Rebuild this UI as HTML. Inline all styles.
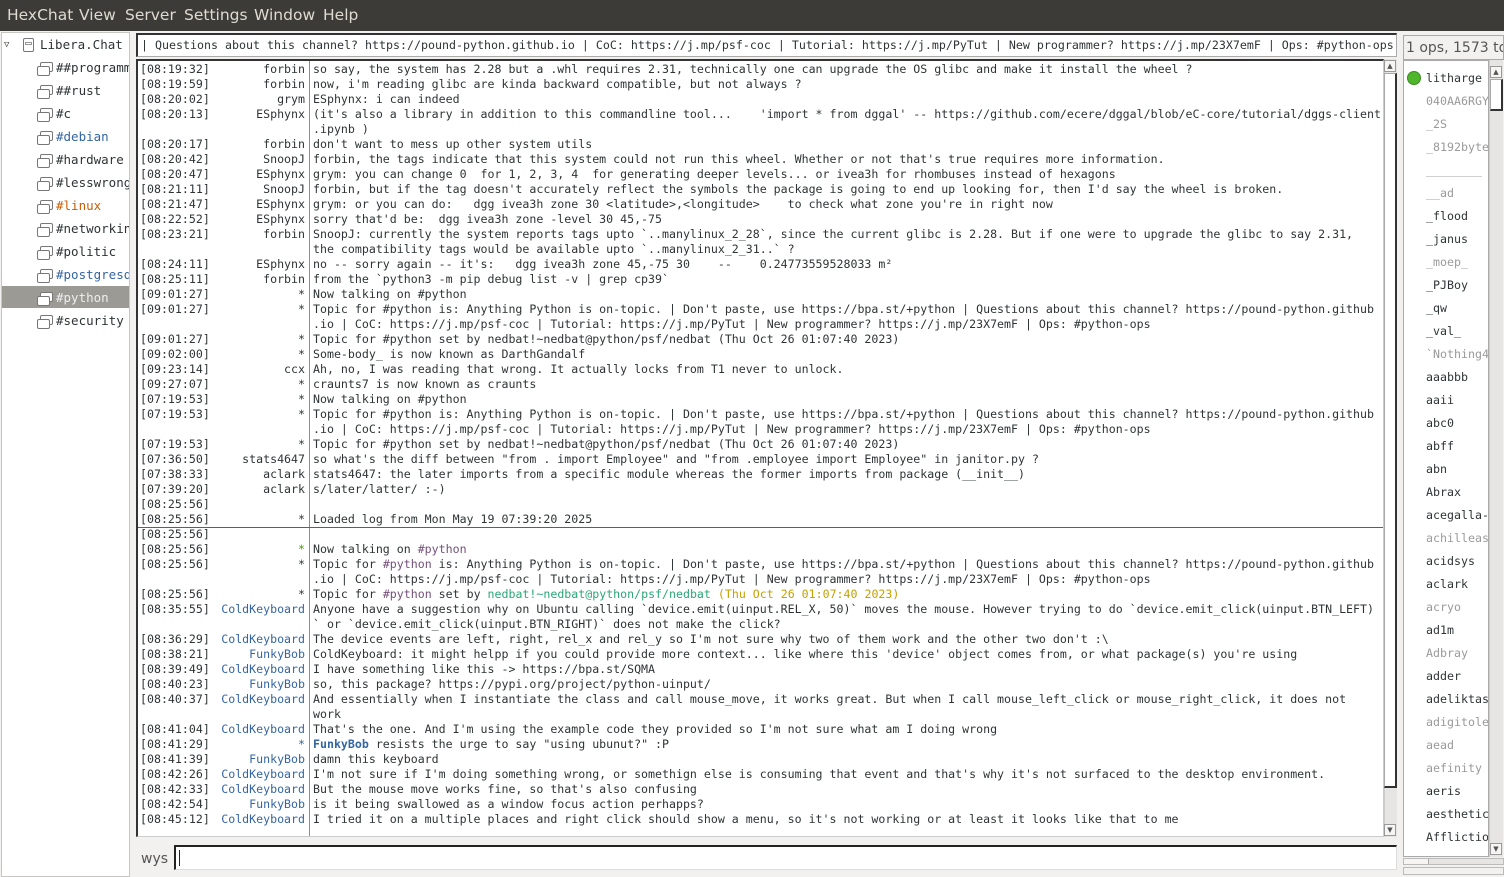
<!DOCTYPE html>
<html><head><meta charset="utf-8"><style>
*{box-sizing:border-box;margin:0;padding:0}
body{width:1504px;height:877px;overflow:hidden;background:#f2f1f0;font-family:"DejaVu Sans","Liberation Sans",sans-serif;color:#2e3436;position:relative}
#menu{position:absolute;left:0;top:0;width:1504px;height:31px;background:#3c3b37;color:#dfdbd2;font-size:15.5px}
#menu span{position:absolute;top:6px}
.mono{font-family:"DejaVu Sans Mono","Liberation Mono",monospace}
#tree{position:absolute;left:1px;top:32px;width:129px;height:845px;background:#fff;border:1px solid #c8c6c3;font-size:12.5px;overflow:hidden}
.ti{position:absolute;height:21px;line-height:21px;white-space:nowrap}
.ic{position:absolute;width:13px;height:10px;border:1.3px solid #777;border-radius:2px;background:#fff}
.ic:before{content:"";position:absolute;left:-4px;top:3px;width:11px;height:8px;border:1.3px solid #777;border-radius:2px;background:#fff}
#topic{position:absolute;left:136px;top:33px;width:1261px;height:24px;background:#fff;border:1px solid #aaa;border-top:2px solid #333;border-left:2px solid #333;font-size:11.63px;line-height:20px;padding-left:3px;white-space:nowrap;overflow:hidden}
#chat{position:absolute;left:136px;top:59px;width:1248px;height:778px;background:#fff;border-top:2px solid #333;border-left:2px solid #333;border-right:1px solid #ccc;border-bottom:1px solid #ccc;overflow:hidden}
.r{position:absolute;left:0;height:15px;line-height:15px;font-size:11.6px;white-space:pre;width:1246px}
.t{position:absolute;left:2px}
.n{position:absolute;right:1079px;text-align:right}
.m{position:absolute;left:175px}
#vl{position:absolute;left:171px;top:0;width:1px;height:780px;background:#8c8ca0}
#sep{position:absolute;left:0;top:466px;width:1246px;height:1px;background:#8f5902}
.sb{position:absolute;background:#e6e5e3;border-left:1px solid #ccc}
.arr{position:absolute;width:12px;height:12px;background:#f6f5f4;border:1px solid #999;font-size:7px;line-height:10px;text-align:center;color:#555}
#input{position:absolute;left:174px;top:845px;width:1223px;height:25px;background:#fff;border-top:2px solid #222;border-left:2px solid #222;border-right:1px solid #ddd;border-bottom:1px solid #ddd}
#users{position:absolute;left:1403px;top:60px;width:86px;height:797px;background:#fff;border:1px solid #aaa;overflow:hidden}
.u{position:absolute;left:22px;height:23px;line-height:23px;font-size:11.63px;white-space:nowrap}
.g{color:#9a9a9a}
.b{color:#3465a4}.p{color:#75507b}.gr{color:#4e9a06}.o{color:#c4a000}
</style></head><body>
<div id="menu"><span style="left:7px">HexChat</span><span style="left:79px">View</span><span style="left:125px">Server</span><span style="left:184px">Settings</span><span style="left:254px">Window</span><span style="left:323px">Help</span></div>

<div id="tree" class="mono">
<div class="ti" style="left:2px;top:2px;font-size:9px;color:#444">▽</div>
<div style="position:absolute;left:21px;top:5px;width:11px;height:14px;border:1.3px solid #777;border-radius:2px"><div style="margin:3px 1px;height:3px;border:1px solid #999"></div></div>
<div class="ti" style="left:38px;top:1px">Libera.Chat</div>
<div class="ic" style="left:38px;top:29px"></div><div class="ti" style="left:54px;top:24px">##programm</div>
<div class="ic" style="left:38px;top:52px"></div><div class="ti" style="left:54px;top:47px">##rust</div>
<div class="ic" style="left:38px;top:75px"></div><div class="ti" style="left:54px;top:70px">#c</div>
<div class="ic" style="left:38px;top:98px"></div><div class="ti b" style="left:54px;top:93px">#debian</div>
<div class="ic" style="left:38px;top:121px"></div><div class="ti" style="left:54px;top:116px">#hardware</div>
<div class="ic" style="left:38px;top:144px"></div><div class="ti" style="left:54px;top:139px">#lesswrong</div>
<div class="ic" style="left:38px;top:167px"></div><div class="ti" style="left:54px;top:162px;color:#ce5c00">#linux</div>
<div class="ic" style="left:38px;top:190px"></div><div class="ti" style="left:54px;top:185px">#networking</div>
<div class="ic" style="left:38px;top:213px"></div><div class="ti" style="left:54px;top:208px">#politic</div>
<div class="ic" style="left:38px;top:236px"></div><div class="ti b" style="left:54px;top:231px">#postgresql</div>
<div style="position:absolute;left:0;top:253px;width:127px;height:22px;background:#9c9a95"></div>
<div class="ic" style="left:38px;top:259px"></div><div class="ti" style="left:54px;top:254px;color:#eee">#python</div>
<div class="ic" style="left:38px;top:282px"></div><div class="ti" style="left:54px;top:277px">#security</div>
</div>

<div id="topic" class="mono">| Questions about this channel? https://pound-python.github.io | CoC: https://j.mp/psf-coc | Tutorial: https://j.mp/PyTut | New programmer? https://j.mp/23X7emF | Ops: #python-ops</div>

<div id="chat" class="mono">
<div id="vl"></div><div id="sep"></div>
<div class="r" style="top:1px"><span class="t">[08:19:32]</span><span class="n">forbin</span><span class="m">so say, the system has 2.28 but a .whl requires 2.31, technically one can upgrade the OS glibc and make it install the wheel ?</span></div>
<div class="r" style="top:16px"><span class="t">[08:19:59]</span><span class="n">forbin</span><span class="m">now, i'm reading glibc are kinda backward compatible, but not always ?</span></div>
<div class="r" style="top:31px"><span class="t">[08:20:02]</span><span class="n">grym</span><span class="m">ESphynx: i can indeed</span></div>
<div class="r" style="top:46px"><span class="t">[08:20:13]</span><span class="n">ESphynx</span><span class="m">(it's also a library in addition to this commandline tool...    'import * from dggal' -- https://github.com/ecere/dggal/blob/eC-core/tutorial/dggs-client</span></div>
<div class="r" style="top:61px"><span class="m">.ipynb )</span></div>
<div class="r" style="top:76px"><span class="t">[08:20:17]</span><span class="n">forbin</span><span class="m">don't want to mess up other system utils</span></div>
<div class="r" style="top:91px"><span class="t">[08:20:42]</span><span class="n">SnoopJ</span><span class="m">forbin, the tags indicate that this system could not run this wheel. Whether or not that's true requires more information.</span></div>
<div class="r" style="top:106px"><span class="t">[08:20:47]</span><span class="n">ESphynx</span><span class="m">grym: you can change 0  for 1, 2, 3, 4  for generating deeper levels... or ivea3h for rhombuses instead of hexagons</span></div>
<div class="r" style="top:121px"><span class="t">[08:21:11]</span><span class="n">SnoopJ</span><span class="m">forbin, but if the tag doesn't accurately reflect the symbols the package is going to end up looking for, then I'd say the wheel is broken.</span></div>
<div class="r" style="top:136px"><span class="t">[08:21:47]</span><span class="n">ESphynx</span><span class="m">grym: or you can do:   dgg ivea3h zone 30 &lt;latitude&gt;,&lt;longitude&gt;    to check what zone you're in right now</span></div>
<div class="r" style="top:151px"><span class="t">[08:22:52]</span><span class="n">ESphynx</span><span class="m">sorry that'd be:  dgg ivea3h zone -level 30 45,-75</span></div>
<div class="r" style="top:166px"><span class="t">[08:23:21]</span><span class="n">forbin</span><span class="m">SnoopJ: currently the system reports tags upto `..manylinux_2_28`, since the current glibc is 2.28. But if one were to upgrade the glibc to say 2.31,</span></div>
<div class="r" style="top:181px"><span class="m">the compatibility tags would be available upto `..manylinux_2_31..` ?</span></div>
<div class="r" style="top:196px"><span class="t">[08:24:11]</span><span class="n">ESphynx</span><span class="m">no -- sorry again -- it's:   dgg ivea3h zone 45,-75 30    --    0.24773559528033 m²</span></div>
<div class="r" style="top:211px"><span class="t">[08:25:11]</span><span class="n">forbin</span><span class="m">from the `python3 -m pip debug list -v | grep cp39`</span></div>
<div class="r" style="top:226px"><span class="t">[09:01:27]</span><span class="n">*</span><span class="m">Now talking on #python</span></div>
<div class="r" style="top:241px"><span class="t">[09:01:27]</span><span class="n">*</span><span class="m">Topic for #python is: Anything Python is on-topic. | Don't paste, use https://bpa.st/+python | Questions about this channel? https://pound-python.github</span></div>
<div class="r" style="top:256px"><span class="m">.io | CoC: https://j.mp/psf-coc | Tutorial: https://j.mp/PyTut | New programmer? https://j.mp/23X7emF | Ops: #python-ops</span></div>
<div class="r" style="top:271px"><span class="t">[09:01:27]</span><span class="n">*</span><span class="m">Topic for #python set by nedbat!~nedbat@python/psf/nedbat (Thu Oct 26 01:07:40 2023)</span></div>
<div class="r" style="top:286px"><span class="t">[09:02:00]</span><span class="n">*</span><span class="m">Some-body_ is now known as DarthGandalf</span></div>
<div class="r" style="top:301px"><span class="t">[09:23:14]</span><span class="n">ccx</span><span class="m">Ah, no, I was reading that wrong. It actually locks from T1 never to unlock.</span></div>
<div class="r" style="top:316px"><span class="t">[09:27:07]</span><span class="n">*</span><span class="m">craunts7 is now known as craunts</span></div>
<div class="r" style="top:331px"><span class="t">[07:19:53]</span><span class="n">*</span><span class="m">Now talking on #python</span></div>
<div class="r" style="top:346px"><span class="t">[07:19:53]</span><span class="n">*</span><span class="m">Topic for #python is: Anything Python is on-topic. | Don't paste, use https://bpa.st/+python | Questions about this channel? https://pound-python.github</span></div>
<div class="r" style="top:361px"><span class="m">.io | CoC: https://j.mp/psf-coc | Tutorial: https://j.mp/PyTut | New programmer? https://j.mp/23X7emF | Ops: #python-ops</span></div>
<div class="r" style="top:376px"><span class="t">[07:19:53]</span><span class="n">*</span><span class="m">Topic for #python set by nedbat!~nedbat@python/psf/nedbat (Thu Oct 26 01:07:40 2023)</span></div>
<div class="r" style="top:391px"><span class="t">[07:36:50]</span><span class="n">stats4647</span><span class="m">so what's the diff between "from . import Employee" and "from .employee import Employee" in janitor.py ?</span></div>
<div class="r" style="top:406px"><span class="t">[07:38:33]</span><span class="n">aclark</span><span class="m">stats4647: the later imports from a specific module whereas the former imports from package (__init__)</span></div>
<div class="r" style="top:421px"><span class="t">[07:39:20]</span><span class="n">aclark</span><span class="m">s/later/latter/ :-)</span></div>
<div class="r" style="top:436px"><span class="t">[08:25:56]</span></div>
<div class="r" style="top:451px"><span class="t">[08:25:56]</span><span class="n">*</span><span class="m">Loaded log from Mon May 19 07:39:20 2025</span></div>
<div class="r" style="top:466px"><span class="t">[08:25:56]</span></div>
<div class="r" style="top:481px"><span class="t">[08:25:56]</span><span class="n gr">*</span><span class="m">Now talking on <span class="p">#python</span></span></div>
<div class="r" style="top:496px"><span class="t">[08:25:56]</span><span class="n">*</span><span class="m">Topic for <span class="p">#python</span> is: Anything Python is on-topic. | Don't paste, use https://bpa.st/+python | Questions about this channel? https://pound-python.github</span></div>
<div class="r" style="top:511px"><span class="m">.io | CoC: https://j.mp/psf-coc | Tutorial: https://j.mp/PyTut | New programmer? https://j.mp/23X7emF | Ops: #python-ops</span></div>
<div class="r" style="top:526px"><span class="t">[08:25:56]</span><span class="n">*</span><span class="m">Topic for <span class="p">#python</span> set by <span style="color:#2aa876">nedbat!~nedbat@python/psf/nedbat</span> <span class="o">(Thu Oct 26 01:07:40 2023)</span></span></div>
<div class="r" style="top:541px"><span class="t">[08:35:55]</span><span class="n b">ColdKeyboard</span><span class="m">Anyone have a suggestion why on Ubuntu calling `device.emit(uinput.REL_X, 50)` moves the mouse. However trying to do `device.emit_click(uinput.BTN_LEFT)</span></div>
<div class="r" style="top:556px"><span class="m">` or `device.emit_click(uinput.BTN_RIGHT)` does not make the click?</span></div>
<div class="r" style="top:571px"><span class="t">[08:36:29]</span><span class="n b">ColdKeyboard</span><span class="m">The device events are left, right, rel_x and rel_y so I'm not sure why two of them work and the other two don't :\</span></div>
<div class="r" style="top:586px"><span class="t">[08:38:21]</span><span class="n b">FunkyBob</span><span class="m">ColdKeyboard: it might helpp if you could provide more context... like where this 'device' object comes from, or what package(s) you're using</span></div>
<div class="r" style="top:601px"><span class="t">[08:39:49]</span><span class="n b">ColdKeyboard</span><span class="m">I have something like this -&gt; https://bpa.st/SQMA</span></div>
<div class="r" style="top:616px"><span class="t">[08:40:23]</span><span class="n b">FunkyBob</span><span class="m">so, this package? https://pypi.org/project/python-uinput/</span></div>
<div class="r" style="top:631px"><span class="t">[08:40:37]</span><span class="n b">ColdKeyboard</span><span class="m">And essentially when I instantiate the class and call mouse_move, it works great. But when I call mouse_left_click or mouse_right_click, it does not</span></div>
<div class="r" style="top:646px"><span class="m">work</span></div>
<div class="r" style="top:661px"><span class="t">[08:41:04]</span><span class="n b">ColdKeyboard</span><span class="m">That's the one. And I'm using the example code they provided so I'm not sure what am I doing wrong</span></div>
<div class="r" style="top:676px"><span class="t">[08:41:29]</span><span class="n b">*</span><span class="m"><b class="b">FunkyBob</b> resists the urge to say "using ubunut?" :P</span></div>
<div class="r" style="top:691px"><span class="t">[08:41:39]</span><span class="n b">FunkyBob</span><span class="m">damn this keyboard</span></div>
<div class="r" style="top:706px"><span class="t">[08:42:26]</span><span class="n b">ColdKeyboard</span><span class="m">I'm not sure if I'm doing something wrong, or somethign else is consuming that event and that's why it's not surfaced to the desktop environment.</span></div>
<div class="r" style="top:721px"><span class="t">[08:42:33]</span><span class="n b">ColdKeyboard</span><span class="m">But the mouse move works fine, so that's also confusing</span></div>
<div class="r" style="top:736px"><span class="t">[08:42:54]</span><span class="n b">FunkyBob</span><span class="m">is it being swallowed as a window focus action perhapps?</span></div>
<div class="r" style="top:751px"><span class="t">[08:45:12]</span><span class="n b">ColdKeyboard</span><span class="m">I tried it on a multiple places and right click should show a menu, so it's not working or at least it looks like that to me</span></div>
</div>

<div class="sb" style="left:1384px;top:59px;width:13px;height:778px"></div>
<div class="arr" style="left:1384px;top:60px">▲</div>
<div style="position:absolute;left:1384px;top:73px;width:13px;height:715px;background:#fff;border:1px solid #aaa;border-right:2px solid #333;border-bottom:2px solid #333"></div>
<div class="arr" style="left:1384px;top:824px">▼</div>

<div style="position:absolute;left:141px;top:851px;font-size:14px;color:#555">wys</div>
<div id="input"><div style="position:absolute;left:3px;top:3px;width:1px;height:16px;background:#222"></div></div>

<div style="position:absolute;left:1403px;top:35px;width:101px;height:25px;border:1px solid #aaa;background:#f2f1f0;font-size:14px;line-height:24px;padding-left:2px;color:#555;white-space:nowrap;overflow:hidden">1 ops, 1573 tot</div>
<div id="users" class="mono">
<div style="position:absolute;left:3px;top:10px;width:14px;height:14px;border-radius:50%;background:#4fb52b;border:1px solid #3a8a1e"></div>
<div class="u" style="top:6px">litharge</div>
<div class="u g" style="top:29px">040AA6RGY</div>
<div class="u g" style="top:52px">_2S</div>
<div class="u g" style="top:75px">_8192byte</div>
<div class="u g" style="top:98px">________</div>
<div class="u g" style="top:121px">__ad</div>
<div class="u" style="top:144px">_flood</div>
<div class="u" style="top:167px">_janus</div>
<div class="u g" style="top:190px">_moep_</div>
<div class="u" style="top:213px">_PJBoy</div>
<div class="u" style="top:236px">_qw</div>
<div class="u" style="top:259px">_val_</div>
<div class="u g" style="top:282px">`Nothing4</div>
<div class="u" style="top:305px">aaabbb</div>
<div class="u" style="top:328px">aaii</div>
<div class="u" style="top:351px">abc0</div>
<div class="u" style="top:374px">abff</div>
<div class="u" style="top:397px">abn</div>
<div class="u" style="top:420px">Abrax</div>
<div class="u" style="top:443px">acegalla-</div>
<div class="u g" style="top:466px">achilleas</div>
<div class="u" style="top:489px">acidsys</div>
<div class="u" style="top:512px">aclark</div>
<div class="u g" style="top:535px">acryo</div>
<div class="u" style="top:558px">ad1m</div>
<div class="u g" style="top:581px">Adbray</div>
<div class="u" style="top:604px">adder</div>
<div class="u" style="top:627px">adeliktas</div>
<div class="u g" style="top:650px">adigitole</div>
<div class="u g" style="top:673px">aead</div>
<div class="u g" style="top:696px">aefinity</div>
<div class="u" style="top:719px">aeris</div>
<div class="u" style="top:742px">aesthetic</div>
<div class="u" style="top:765px">Afflictio</div>
</div>
<div class="sb" style="left:1489px;top:60px;width:14px;height:797px"></div>
<div class="arr" style="left:1490px;top:66px">▲</div>
<div style="position:absolute;left:1490px;top:79px;width:13px;height:32px;background:#fff;border:1px solid #aaa;border-right:2px solid #333;border-bottom:2px solid #333"></div>
<div class="arr" style="left:1490px;top:843px">▼</div>
<div style="position:absolute;left:1403px;top:858px;width:101px;height:7px;border:1px solid #bbb;background:#e6e5e3"><div style="width:25px;height:5px;background:#f6f5f4;border-right:1px solid #aaa"></div></div>
<div style="position:absolute;left:1403px;top:867px;width:101px;height:8px;border:1px solid #bbb"></div>
</body></html>
